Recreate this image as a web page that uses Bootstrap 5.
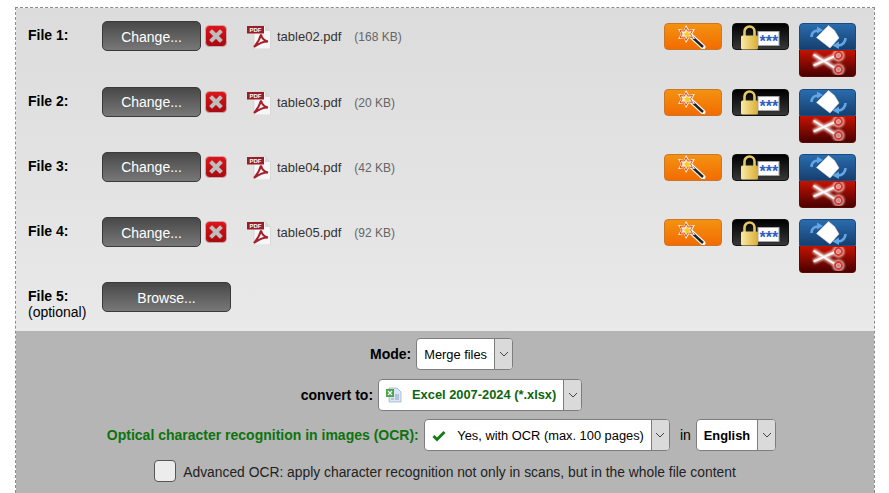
<!DOCTYPE html>
<html lang="en">
<head>
    <meta charset="UTF-8">
    <meta name="viewport" content="width=device-width, initial-scale=1.0">
    <title>File converter</title>
    <link href="https://cdn.jsdelivr.net/npm/bootstrap@5.3.3/dist/css/bootstrap.min.css" rel="stylesheet" crossorigin="anonymous">
    <style>
        * {
            font-family: "Liberation Sans", Arial, sans-serif;
        }
        body {
            background: #fff;
            color: #000;
            font-size: 14px;
            line-height: 16px;
            overflow: hidden;
        }
        #converter {
            margin: 7px 15px 0;
            border: 1px dashed #8c8c8c;
            border-bottom: 0;
            width: 860px;
        }
        .file-panel {
            background: linear-gradient(#dcdcdc, #e9e9e9);
            padding: 13.3px 18px 0 12px;
            height: 323px;
        }
        .file-row {
            height: 65.3px;
        }
        .file-label {
            width: 74px;
            padding-top: 6px;
        }
        .pick-btn {
            width: 99px;
            height: 30px;
            background: linear-gradient(#484848, #787878);
            border: 1px solid #3a3a3a;
            border-radius: 5px;
            color: #fff;
            font-size: 14px;
            padding: 2px 0 0;
        }
        .pick-btn.wide {
            width: 129px;
        }
        .remove-btn {
            width: 22px;
            height: 22px;
            margin: 4px 0 0 4px;
            padding: 0;
            background: none;
            border: 0;
        }
        .file-info {
            margin-left: 20px;
            margin-top: 4px;
            font-size: 13px;
            color: #333;
        }
        .file-name {
            margin: 0 13px 0 6px;
            padding-top: 4px;
        }
        .file-size {
            font-size: 12px;
            color: #666;
            padding-top: 4px;
        }
        .file-actions {
            gap: 10px;
        }
        .action-top {
            margin-top: 2px;
        }
        .action-btn {
            width: 57px;
            height: 27px;
            padding: 0;
            border: 1px solid;
            border-radius: 4px;
            display: flex;
            align-items: center;
            justify-content: center;
        }
        .btn-wand {
            width: 58px;
            background: linear-gradient(#f39212, #f36c00);
            border-color: #c9772c;
        }
        .btn-lock {
            background: linear-gradient(#000, #383838);
            border-color: #111;
        }
        .btn-rotate {
            background: linear-gradient(#2a6cad, #163f70);
            border-color: #1d4a7c;
            border-radius: 4px 4px 0 0;
        }
        .btn-cut {
            background: linear-gradient(#c41300, #4a0000);
            border-color: #5e0a04;
            border-radius: 0 0 4px 4px;
            border-top: 0;
        }
        .options-panel {
            background: #b5b5b5;
            height: 162px;
            padding-top: 7px;
            padding-right: 7px;
        }
        .option-row {
            height: 32px;
            margin-bottom: 8.5px;
            font-weight: 700;
        }
        .pseudo-select {
            height: 32px;
            margin-left: 5px;
            background: #fff;
            border: 1px solid #7d7d7d;
            border-radius: 4px;
            overflow: hidden;
            font-size: 12.85px;
            font-weight: 400;
        }
        .select-value {
            padding: 1px 7px 0;
        }
        .excel-gap {
            gap: 10px;
        }
        .select-arrow {
            width: 18px;
            background: #dadada;
            border-left: 1px solid #7d7d7d;
        }
        .text-ok {
            color: #0d730d;
        }
        .excel-value {
            color: #0d660d;
            font-weight: 700;
        }
        .in-word {
            font-weight: 400;
            margin: 0 0 0 10px;
        }
        .ocr-row {
            margin-left: 7px;
        }
        .ocr-check {
            width: 22px;
            height: 22px;
            background: #ececec;
            border: 1px solid #555;
            border-radius: 4px;
            flex: none;
        }
        .ocr-note {
            margin-left: 7px;
            padding-top: 3px;
            font-size: 13.85px;
            color: #222;
        }
    </style>
</head>
<body>

    <svg width="0" height="0" class="position-absolute">
        <defs>
            <linearGradient id="redBtn" x1="0" y1="0" x2="0" y2="1"><stop offset="0" stop-color="#e0141a"/><stop offset="1" stop-color="#a50a10"/></linearGradient>
            <linearGradient id="lockBody" x1="0" y1="0" x2="1" y2="0"><stop offset="0" stop-color="#f9eba6"/><stop offset="1" stop-color="#d9ad35"/></linearGradient>
            <filter id="soft" x="-30%" y="-30%" width="160%" height="160%"><feGaussianBlur stdDeviation="1.300"/></filter>
            <symbol id="iconRemove" viewBox="0 0 22 22">
                <rect x=".5" y=".5" width="21" height="21" rx="4" fill="url(#redBtn)" stroke="#c9a9a9"/>
                <path d="M7 7l8 8M15 7l-8 8" stroke="#bdbdbd" stroke-width="4" stroke-linecap="square"/>
            </symbol>
            <symbol id="iconPdf" viewBox="0 0 24 24">
                <path d="M7 .5h11l5.500 5.500v18H7z" fill="#f6f6f6" stroke="#d0d0d0" stroke-width=".7"/>
                <path d="M18 .5v5.500h5.500z" fill="#d8d8d8"/>
                <rect x="0" y="1" width="17" height="7.500" fill="#9c1d2a"/>
                <text x="2.500" y="7" font-size="6" font-weight="700" fill="#fff">PDF</text>
                <path d="M14 9.500c-1 4-4 9-7 12.500 4-3 9-5.500 14-5.500-3-.5-6-3-7-7z" fill="none" stroke="#a3202c" stroke-width="2"/>
            </symbol>
            <symbol id="iconWand" viewBox="0 0 32 24">
                <path d="M13 10l13 12" stroke="#fff" stroke-width="5" stroke-linecap="round"/>
                <path d="M13 10l13 12" stroke="#222" stroke-width="2.400"/>
                <polygon points="9,0 12,5 18,4 15,9 18,14 12,13 9,18 7,13 1,14 4,9 1,4 7,5" fill="#fff"/>
                <polygon points="9,2.500 11,6 15.500,5.500 13.500,9 15.500,12.500 11,12 9,15.500 7.500,12 3,12.500 5,9 3,5.500 7.500,6" fill="#fbe9c8" stroke="#d9502f" stroke-width="1"/>
                <polygon points="10,5.500 11.500,8 14,8.500 12,10.500 12.500,13 10,12 8,13 8.500,10.500 6.500,8.500 9,8" fill="#f6cb2c"/>
            </symbol>
            <symbol id="iconLock" viewBox="0 0 40 26">
                <rect x="17" y="7.500" width="21" height="14" fill="#fff" stroke="#a5a5a5"/>
                <text x="18.500" y="23" font-size="16" font-weight="700" fill="#2b5fc0">***</text>
                <path d="M3.500 12V7.500a5 5 0 0 1 10 0V12" fill="none" stroke="#e6c862" stroke-width="2.600"/>
                <rect x="0" y="11.500" width="17" height="14" rx="1.500" fill="url(#lockBody)"/>
            </symbol>
            <symbol id="iconRotate" viewBox="0 0 40 24">
                <path d="M20.500 .5l6 5 4.500 7.500-9 10-13.500-10.500z" fill="#fff" stroke="#dcdcdc" stroke-width=".6"/>
                <path d="M3.500 12c0-3.500 2-6 6-6.500" fill="none" stroke="#62a6e4" stroke-width="2.600"/>
                <path d="M9 1.500l6 3.500-6 3.500z" fill="#62a6e4"/>
                <path d="M37.500 13c0 4-3 7.500-7.500 7.500" fill="none" stroke="#62a6e4" stroke-width="2.600"/>
                <path d="M31 16.500l-6.500 4 6.500 3.500z" fill="#62a6e4"/>
            </symbol>
            <symbol id="iconCut" viewBox="0 0 40 24">
                <g fill="none" stroke="#f4d3cf" stroke-width="5" opacity=".85" filter="url(#soft)">
                    <path d="M5.500 3.500L26 16.500M5.500 14.500L26 5.500"/>
                    <circle cx="30.500" cy="4.500" r="3.500"/>
                    <circle cx="30.500" cy="18.500" r="3.500"/>
                </g>
                <path d="M5.500 3.500L26 16.500M5.500 14.500L26 5.500" stroke="#f6f6f6" stroke-width="2"/>
                <circle cx="30.500" cy="4.500" r="3.500" fill="none" stroke="#d9352e" stroke-width="1.800"/>
                <circle cx="30.500" cy="18.500" r="3.500" fill="none" stroke="#d9352e" stroke-width="1.800"/>
            </symbol>
            <symbol id="iconExcel" viewBox="0 0 16 16">
                <path d="M3 1h8l4 4v10H3z" fill="#dbe6f4" stroke="#93a9c6" stroke-width=".7"/>
                <rect x="0" y="2" width="8" height="8" fill="#4ea24e"/>
                <path d="M2 4l4 4M6 4l-4 4" stroke="#fff" stroke-width="1.200"/>
                <path d="M9 8h4M9 10h4M9 12h4M5 12h3" stroke="#8aa3c0"/>
            </symbol>
            <symbol id="iconCheck" viewBox="0 0 14 12">
                <path d="M1.500 6l3.500 3.500L12.500 2" fill="none" stroke="#167a16" stroke-width="3"/>
            </symbol>
            <symbol id="iconCaret" viewBox="0 0 10 6">
                <path d="M1 1l4 4 4-4" fill="none" stroke="#444" stroke-width="1"/>
            </symbol>
        </defs>
    </svg>

    <div id="converter">
        <div class="file-panel">

            <div class="file-row d-flex">
                <div class="file-label"><strong>File 1:</strong></div>
                <button type="button" class="btn pick-btn">Change...</button>
                <button type="button" class="remove-btn"><svg width="22" height="22"><use href="#iconRemove"/></svg></button>
                <div class="file-info d-flex">
                    <svg width="24" height="24"><use href="#iconPdf"/></svg>
                    <span class="file-name">table02.pdf</span>
                    <span class="file-size">(168 KB)</span>
                </div>
                <div class="ms-auto d-flex file-actions">
                    <button type="button" class="action-btn btn-wand action-top"><svg width="32" height="24"><use href="#iconWand"/></svg></button>
                    <button type="button" class="action-btn btn-lock action-top"><svg width="40" height="26"><use href="#iconLock"/></svg></button>
                    <div class="action-top">
                        <button type="button" class="action-btn btn-rotate"><svg width="40" height="24"><use href="#iconRotate"/></svg></button>
                        <button type="button" class="action-btn btn-cut"><svg width="40" height="24"><use href="#iconCut"/></svg></button>
                    </div>
                </div>
            </div>

            <div class="file-row d-flex">
                <div class="file-label"><strong>File 2:</strong></div>
                <button type="button" class="btn pick-btn">Change...</button>
                <button type="button" class="remove-btn"><svg width="22" height="22"><use href="#iconRemove"/></svg></button>
                <div class="file-info d-flex">
                    <svg width="24" height="24"><use href="#iconPdf"/></svg>
                    <span class="file-name">table03.pdf</span>
                    <span class="file-size">(20 KB)</span>
                </div>
                <div class="ms-auto d-flex file-actions">
                    <button type="button" class="action-btn btn-wand action-top"><svg width="32" height="24"><use href="#iconWand"/></svg></button>
                    <button type="button" class="action-btn btn-lock action-top"><svg width="40" height="26"><use href="#iconLock"/></svg></button>
                    <div class="action-top">
                        <button type="button" class="action-btn btn-rotate"><svg width="40" height="24"><use href="#iconRotate"/></svg></button>
                        <button type="button" class="action-btn btn-cut"><svg width="40" height="24"><use href="#iconCut"/></svg></button>
                    </div>
                </div>
            </div>

            <div class="file-row d-flex">
                <div class="file-label"><strong>File 3:</strong></div>
                <button type="button" class="btn pick-btn">Change...</button>
                <button type="button" class="remove-btn"><svg width="22" height="22"><use href="#iconRemove"/></svg></button>
                <div class="file-info d-flex">
                    <svg width="24" height="24"><use href="#iconPdf"/></svg>
                    <span class="file-name">table04.pdf</span>
                    <span class="file-size">(42 KB)</span>
                </div>
                <div class="ms-auto d-flex file-actions">
                    <button type="button" class="action-btn btn-wand action-top"><svg width="32" height="24"><use href="#iconWand"/></svg></button>
                    <button type="button" class="action-btn btn-lock action-top"><svg width="40" height="26"><use href="#iconLock"/></svg></button>
                    <div class="action-top">
                        <button type="button" class="action-btn btn-rotate"><svg width="40" height="24"><use href="#iconRotate"/></svg></button>
                        <button type="button" class="action-btn btn-cut"><svg width="40" height="24"><use href="#iconCut"/></svg></button>
                    </div>
                </div>
            </div>

            <div class="file-row d-flex">
                <div class="file-label"><strong>File 4:</strong></div>
                <button type="button" class="btn pick-btn">Change...</button>
                <button type="button" class="remove-btn"><svg width="22" height="22"><use href="#iconRemove"/></svg></button>
                <div class="file-info d-flex">
                    <svg width="24" height="24"><use href="#iconPdf"/></svg>
                    <span class="file-name">table05.pdf</span>
                    <span class="file-size">(92 KB)</span>
                </div>
                <div class="ms-auto d-flex file-actions">
                    <button type="button" class="action-btn btn-wand action-top"><svg width="32" height="24"><use href="#iconWand"/></svg></button>
                    <button type="button" class="action-btn btn-lock action-top"><svg width="40" height="26"><use href="#iconLock"/></svg></button>
                    <div class="action-top">
                        <button type="button" class="action-btn btn-rotate"><svg width="40" height="24"><use href="#iconRotate"/></svg></button>
                        <button type="button" class="action-btn btn-cut"><svg width="40" height="24"><use href="#iconCut"/></svg></button>
                    </div>
                </div>
            </div>

            <div class="file-row d-flex">
                <div class="file-label"><strong>File 5:</strong><br>(optional)</div>
                <button type="button" class="btn pick-btn wide">Browse...</button>
            </div>

        </div>

        <div class="options-panel">
            <div class="option-row d-flex justify-content-center align-items-center">
                <span>Mode:</span>
                <div class="pseudo-select d-flex align-items-stretch">
                    <span class="select-value d-flex align-items-center">Merge files</span>
                    <span class="select-arrow d-flex align-items-center justify-content-center"><svg width="10" height="6"><use href="#iconCaret"/></svg></span>
                </div>
            </div>
            <div class="option-row d-flex justify-content-center align-items-center">
                <span>convert to:</span>
                <div class="pseudo-select d-flex align-items-stretch">
                    <span class="select-value excel-gap d-flex align-items-center"><svg width="16" height="16"><use href="#iconExcel"/></svg><span class="excel-value">Excel 2007-2024 (*.xlsx)</span></span>
                    <span class="select-arrow d-flex align-items-center justify-content-center"><svg width="10" height="6"><use href="#iconCaret"/></svg></span>
                </div>
            </div>
            <div class="option-row d-flex justify-content-center align-items-center">
                <span class="text-ok">Optical character recognition in images (OCR):</span>
                <div class="pseudo-select d-flex align-items-stretch">
                    <span class="select-value d-flex align-items-center gap-2"><svg width="14" height="12"><use href="#iconCheck"/></svg>&nbsp;Yes, with OCR (max. 100 pages)</span>
                    <span class="select-arrow d-flex align-items-center justify-content-center"><svg width="10" height="6"><use href="#iconCaret"/></svg></span>
                </div>
                <span class="in-word">in</span>
                <div class="pseudo-select d-flex align-items-stretch">
                    <span class="select-value d-flex align-items-center fw-bold">English</span>
                    <span class="select-arrow d-flex align-items-center justify-content-center"><svg width="10" height="6"><use href="#iconCaret"/></svg></span>
                </div>
            </div>
            <div class="ocr-row d-flex justify-content-center align-items-center">
                <span class="ocr-check"></span>
                <span class="ocr-note">Advanced OCR: apply character recognition not only in scans, but in the whole file content</span>
            </div>
        </div>
    </div>

    <script src="https://cdn.jsdelivr.net/npm/bootstrap@5.3.3/dist/js/bootstrap.bundle.min.js" crossorigin="anonymous"></script>
</body>
</html>
